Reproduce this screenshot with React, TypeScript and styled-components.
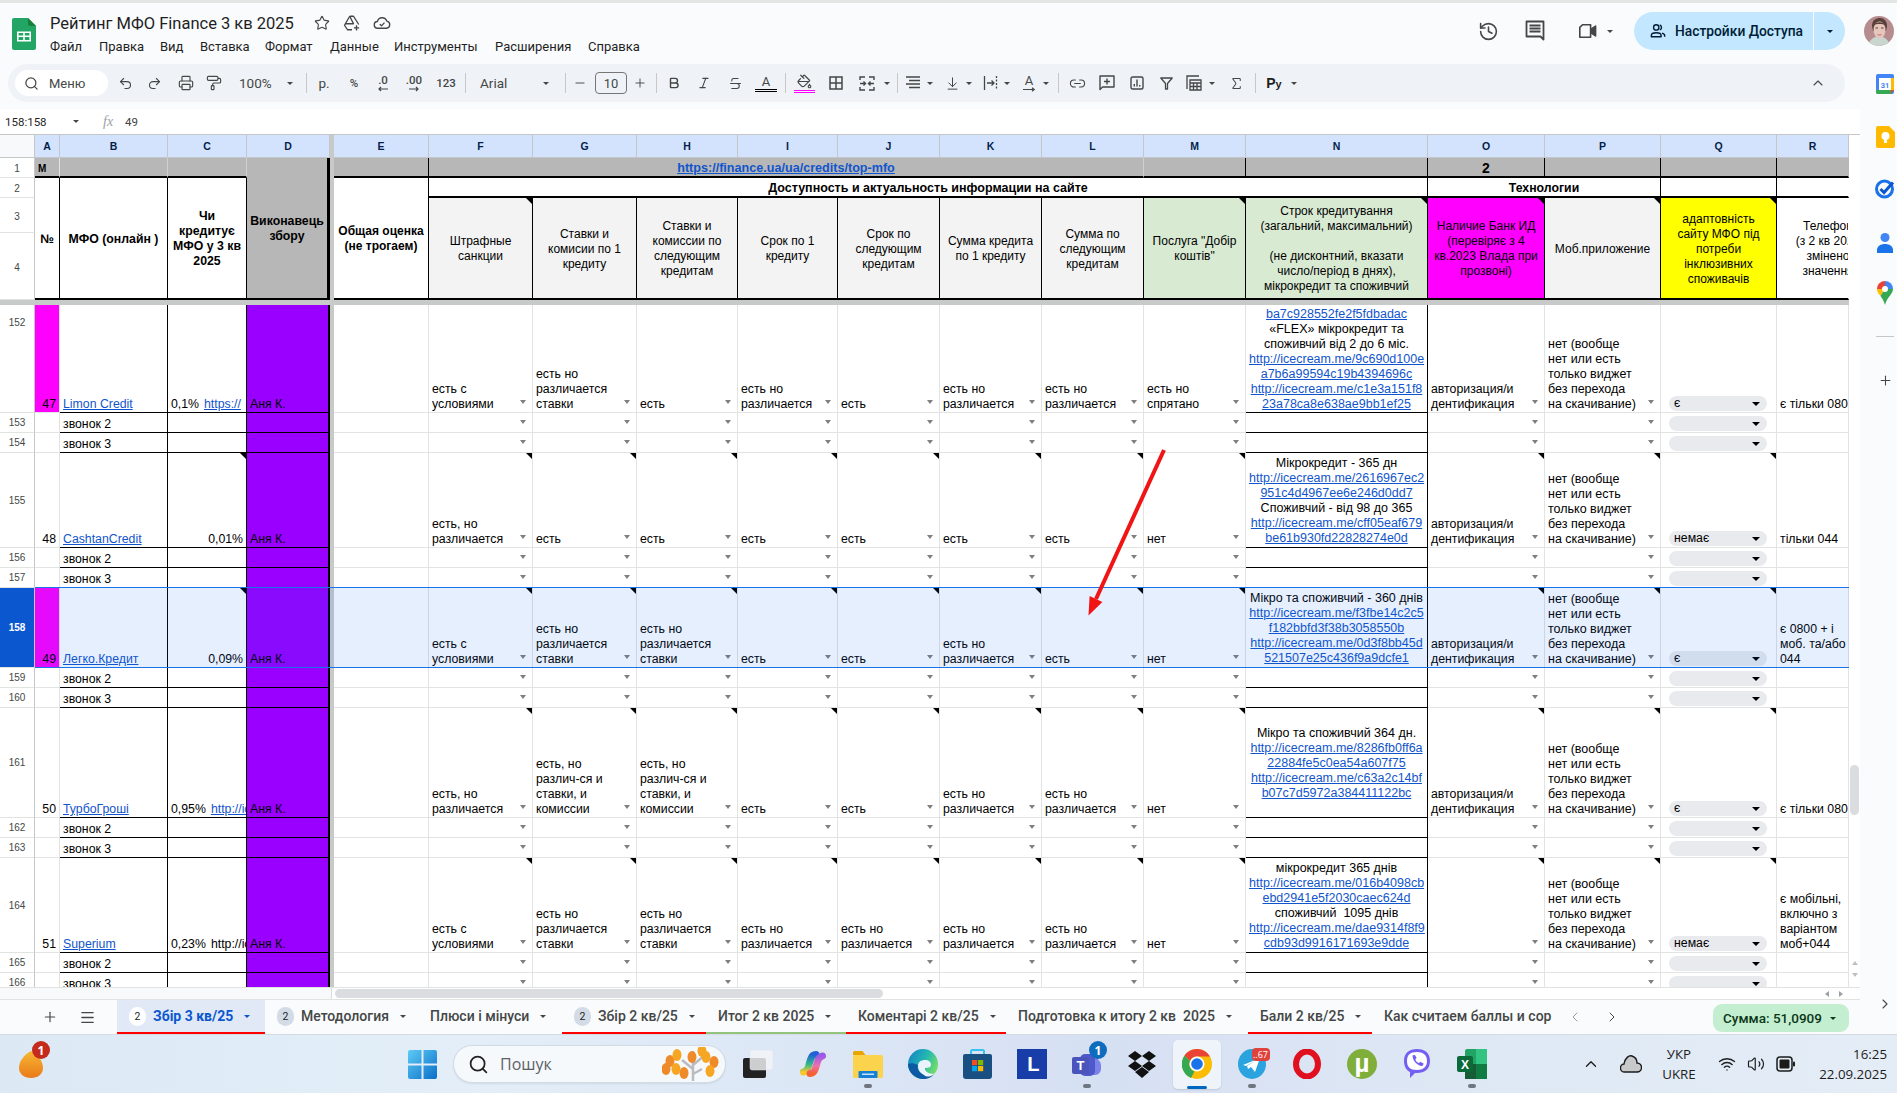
import React from "react";
import styled, { createGlobalStyle } from "styled-components";
import {
  Undo2, Redo2, Printer, PaintRoller, Search, Star, History, ChevronUp, ChevronLeft, ChevronRight,
  Plus, Minus, Menu, Link2, Sigma, Bold, Italic, Strikethrough, PaintBucket, Wifi, Volume2, ArrowDownToLine,
} from "lucide-react";

const Global = createGlobalStyle`
  html, body { margin: 0; padding: 0; background: #f9fbfd; }
  body { font-family: "Liberation Sans", Arial, sans-serif; }
  * { box-sizing: border-box; }
`;

const Page = styled.div`
  width: 1897px; height: 1093px; display: flex; flex-direction: column; overflow: hidden; background: #f9fbfd; position: relative;
`;
const Annotation = styled.svg`
  position: absolute; left: 1080px; top: 445px; width: 90px; height: 175px; z-index: 10; pointer-events: none;
`;
const TopStrip = styled.div`height: 3px; background: #e3e5e5; flex: none;`;
const Workspace = styled.div`display: flex; flex: none; height: 1031px;`;
const LeftCol = styled.div`width: 1860px; display: flex; flex-direction: column;`;

/* ---------- title area ---------- */
const TitleArea = styled.div`height: 61px; display: flex; padding-left: 12px; flex: none;`;
const DocIcon = styled.div`width: 24px; margin: 15px 14px 0 0;`;
const TitleStack = styled.div`display: flex; flex-direction: column;`;
const TitleRow = styled.div`display: flex; align-items: center; height: 26px; margin-top: 7px;`;
const DocTitle = styled.div`
  font-family: Roboto, sans-serif; font-size: 16.5px; color: #1f1f1f; min-width: 257px; white-space: nowrap;
`;
const TitleIcon = styled.div`width: 30px; display: flex; justify-content: center; color: #444746;`;
const MenuRow = styled.div`display: flex; height: 20px; align-items: center;`;
const MenuItem = styled.div<{ $w: number }>`
  width: ${(p) => p.$w}px; font-family: Roboto, sans-serif; font-size: 13px; color: #1f1f1f; white-space: nowrap;
`;
const RightTools = styled.div`margin-left: auto; display: flex; align-items: center; height: 38px; margin-top: 9px;`;
const HeadIcon = styled.div<{ $w: number }>`
  width: ${(p) => p.$w}px; display: flex; justify-content: center; align-items: center; color: #444746; flex: none;
`;
const ShareBtn = styled.div`
  width: 211px; height: 38px; margin: 0 15px 0 0; background: #c2e7ff; border-radius: 19px; display: flex; align-items: center;
`;
const ShareMain = styled.div`
  width: 180px; height: 100%; display: flex; align-items: center; gap: 9px; padding-left: 16px;
  border-right: 1px solid #f9fbfd; font-family: Roboto, sans-serif; font-size: 13.8px; font-weight: 500; color: #001d35; white-space: nowrap;
`;
const ShareArrow = styled.div`flex: 1; display: flex; justify-content: center;`;
const Caret = styled.span<{ $c?: string; $s?: number }>`
  display: inline-block; width: 0; height: 0; flex: none;
  border-left: ${(p) => p.$s ?? 4}px solid transparent; border-right: ${(p) => p.$s ?? 4}px solid transparent;
  border-top: ${(p) => p.$s ?? 4}px solid ${(p) => p.$c ?? "#444746"};
`;

/* ---------- toolbar ---------- */
const Toolbar = styled.div`
  height: 38px; margin: 0 15px 7px 8px; background: #eff3f8; border-radius: 19px; display: flex; align-items: center;
  padding-left: 7px; flex: none; color: #444746;
`;
const MenuPill = styled.div`
  width: 93px; height: 26px; border-radius: 13px; background: #fff; display: flex; align-items: center; gap: 10px; padding-left: 9px; flex: none;
  font-family: Roboto, sans-serif; font-size: 13px; color: #444746;
`;
const ToolBtn = styled.div<{ $w: number; $pl?: number; $between?: boolean; $end?: boolean }>`
  width: ${(p) => p.$w}px; height: 100%; flex: none; display: flex; align-items: center;
  justify-content: ${(p) => (p.$between ? "space-between" : "center")}; padding-left: ${(p) => p.$pl ?? 0}px;
  padding-right: ${(p) => (p.$between ? 3 : 0)}px; font-family: Roboto, sans-serif; font-size: 13.5px; color: #444746;
  margin-left: ${(p) => (p.$end ? "auto" : "0")};
`;
const Sep = styled.div<{ $ml?: number }>`
  width: 1px; height: 20px; background: #c7c7c7; flex: none; margin-left: ${(p) => p.$ml ?? 0}px;
`;
const SizeBox = styled.div`
  width: 32px; height: 22px; border: 1px solid #747775; border-radius: 4px; display: flex; align-items: center; justify-content: center;
  font-family: Roboto, sans-serif; font-size: 13px; color: #444746; flex: none; margin-left: 1px;
`;
const DecText = styled.span`font-size: 11.5px; font-weight: 500; line-height: 11px;`;
const DecWrap = styled.div`display: flex; flex-direction: column; align-items: center;`;
const LetterA = styled.div<{ $bar: string }>`
  font-family: Roboto, sans-serif; font-size: 13px; line-height: 13px; color: #444746; border-bottom: 3px double ${(p) => p.$bar};
  width: 22px; text-align: center; padding-bottom: 1px;
`;
const RotA = styled.div`
  font-family: Roboto, sans-serif; font-size: 13px; line-height: 12px; color: #444746; display: flex; flex-direction: column; align-items: center;
`;
const BucketBar = styled.div`width: 21px; height: 3px; border-top: 1px solid #ff00ff; border-bottom: 1px solid #ff00ff; margin-top: 1px;`;
const StackCol = styled.div`display: flex; flex-direction: column; align-items: center;`;
const PyText = styled.span`font-family: "Liberation Sans", sans-serif; font-weight: 700; font-size: 14px; color: #1f1f1f;`;
const PySmall = styled.span`font-size: 11px;`;

/* ---------- formula bar ---------- */
const FormulaBar = styled.div`
  height: 26px; flex: none; background: #fff; display: flex; align-items: center; font-size: 11.5px; color: #1f1f1f; border-bottom: 1px solid #c4c7c5;
`;
const NameBox = styled.div`width: 103px; padding-left: 5px; display: flex; align-items: center; font-family: Roboto, sans-serif; font-size: 11.5px;`;
const NameCaret = styled.span`margin-left: 26px; display: inline-flex;`;
const FxMark = styled.span`
  width: 22px; font-family: "Liberation Serif", serif; font-style: italic; font-size: 14px; color: #9aa0a6;
`;
const FormulaText = styled.span`font-size: 11.5px; color: #444; font-family: Roboto, sans-serif;`;

/* ---------- sheet ---------- */
const SheetRow = styled.div`display: flex; height: 852px; flex: none;`;
const Grid = styled.div`
  width: 1849px; height: 852px; overflow: hidden; display: grid; background: #fff; position: relative; flex: none;
  grid-template-columns: 35px 25px 108px 79px 83px 4px 95px 104px 104px 101px 100px 102px 102px 102px 102px 182px 117px 116px 116px 72px;
  grid-template-rows: 23px 20px 20px 35px 67px 5px 108px 20px 20px 95px 20px 20px 80px 20px 20px 110px 20px 20px 95px 20px 20px;
  font-size: 12px; line-height: 15px; color: #000;
`;
const Corner = styled.div`
  grid-row: 1; grid-column: 1; background: #f8f9fa; border-right: 1px solid #c4c7c5; border-bottom: 1px solid #c4c7c5;
`;
const ColHead = styled.div<{ $c: number }>`
  grid-row: 1; grid-column: ${(p) => p.$c}; background: #d3e3fd; color: #041e49; font-size: 10.5px; font-weight: 700; padding-top: 1px;
  display: flex; align-items: center; justify-content: center; border-right: 1px solid #c4c7c5; border-bottom: 1px solid #c4c7c5;
`;
const RowHead = styled.div<{ $r: number; $sel?: boolean; $top?: boolean; $hdr?: boolean }>`
  grid-row: ${(p) => p.$r}; grid-column: 1; font-size: 10px; display: flex; justify-content: center;
  align-items: ${(p) => (p.$top ? "flex-start" : "center")}; padding-top: ${(p) => (p.$top ? 10 : p.$hdr ? 2 : 0)}px;
  color: ${(p) => (p.$sel ? "#fff" : "#444746")}; font-weight: ${(p) => (p.$sel ? 700 : 400)};
  background: ${(p) => (p.$sel ? "#0b57d0" : "#fff")}; border-right: 1px solid #c4c7c5; border-bottom: 1px solid #e1e3e1;
`;
const FreezeV = styled.div`grid-row: 1 / -1; grid-column: 6; background: #c8c9c9; z-index: 1;`;
const FreezeH = styled.div`grid-row: 6; grid-column: 1 / -1; background: #c8c9c9;`;
const Band = styled.div`
  grid-row: 13; grid-column: 2 / -1; background: rgba(14, 101, 235, 0.1); border-top: 1px solid #1a73e8; border-bottom: 1px solid #1a73e8;
  margin-top: -1px; z-index: 3; pointer-events: none;
`;

type CellProps = {
  $r: number; $c: number; $rs?: number; $cs?: number; $bg?: string; $right?: string; $bottom?: string; $bw?: number; $rw?: number;
  $v?: "end" | "center"; $h?: "left" | "center" | "right"; $bold?: boolean; $fs?: number;
};
const Cell = styled.div<CellProps>`
  grid-row: ${(p) => p.$r} / span ${(p) => p.$rs ?? 1}; grid-column: ${(p) => p.$c} / span ${(p) => p.$cs ?? 1};
  position: relative; display: flex; flex-direction: column; min-width: 0; min-height: 0;
  justify-content: ${(p) => (p.$v === "center" ? "center" : "flex-end")};
  text-align: ${(p) => p.$h ?? "left"}; white-space: pre; overflow: hidden; padding: ${(p) => (p.$v === "center" ? 2 : 0)}px 3px 0;
  background: ${(p) => p.$bg ?? "transparent"};
  border-right: ${(p) => p.$rw ?? 1}px solid ${(p) => p.$right ?? "#e2e3e3"};
  border-bottom: ${(p) => p.$bw ?? 1}px solid ${(p) => p.$bottom ?? "#e2e3e3"};
  font-weight: ${(p) => (p.$bold ? 700 : 400)}; font-size: ${(p) => p.$fs ?? 12.3}px;
`;
const Note = styled.span`
  position: absolute; top: 0; right: 0; width: 0; height: 0; border-top: 6px solid #000; border-left: 6px solid transparent;
`;
const Drop = styled.span`
  position: absolute; right: 6.5px; bottom: 8px; width: 0; height: 0;
  border-left: 3.5px solid transparent; border-right: 3.5px solid transparent; border-top: 4px solid #7f7f7f;
`;
const Chip = styled.div`
  height: 15px; border-radius: 8px; background: #e8eaed; margin: 0 6px 1px 5px; padding: 0 7px 0 5px; display: flex; align-items: center;
  justify-content: space-between; font-size: 12.3px; flex: none;
`;
const LinkText = styled.span`color: #1155cc; text-decoration: underline;`;
const Line = styled.div``;
const NBlock = styled.div`font-size: 12.5px;`;
const UrlRow = styled.div`display: flex; gap: 5px; white-space: nowrap;`;
const RightText = styled.div`margin-left: auto;`;
const RHeadInner = styled.div`width: 96px; text-align: center; white-space: pre;`;

/* ---------- scroll ---------- */
const VScroll = styled.div`width: 11px; height: 852px; background: #fff; display: flex; flex-direction: column; align-items: center; flex: none;`;
const VThumb = styled.div`width: 9px; height: 50px; margin-top: 630px; background: #dadce0; border-radius: 5px;`;
const VArrow = styled.span<{ $up?: boolean; $mt: number }>`
  margin-top: ${(p) => p.$mt}px; width: 0; height: 0; border-left: 3px solid transparent; border-right: 3px solid transparent;
  ${(p) => (p.$up ? "border-bottom: 4px solid #bdc1c6;" : "border-top: 4px solid #bdc1c6;")}
`;
const HScroll = styled.div`
  height: 13px; flex: none; display: flex; align-items: center; background: #fff; border-top: 1px solid #e1e3e1; border-bottom: 1px solid #e1e3e1;
`;
const HFrozen = styled.div`width: 332px; height: 100%; background: #f8f9fa; border-right: 1px solid #dadce0;`;
const HThumb = styled.div`width: 548px; height: 9px; margin-left: 3px; background: #dadce0; border-radius: 5px;`;
const HArrows = styled.div`margin-left: auto; display: flex; gap: 10px; padding-right: 17px; align-items: center;`;
const HArrowL = styled.span`width: 0; height: 0; border-top: 3px solid transparent; border-bottom: 3px solid transparent; border-right: 4px solid #9aa0a6;`;
const HArrowR = styled.span`width: 0; height: 0; border-top: 3px solid transparent; border-bottom: 3px solid transparent; border-left: 4px solid #9aa0a6;`;

/* ---------- tabs ---------- */
const TabBar = styled.div`height: 34px; flex: none; display: flex; align-items: stretch; background: #f9fbfd; color: #444746;`;
const TabTools = styled.div`width: 117px; padding-left: 30px; display: flex; align-items: center; flex: none;`;
const TabTool = styled.div<{ $w: number }>`width: ${(p) => p.$w}px; display: flex; justify-content: center;`;
const Tab = styled.div<{ $w: number; $line?: string; $active?: boolean }>`
  width: ${(p) => p.$w}px; flex: none; display: flex; align-items: center; padding-left: 12px; gap: 7px; overflow: hidden; white-space: pre;
  font-family: Roboto, sans-serif; font-size: 14px; font-weight: ${(p) => (p.$active ? 700 : 500)};
  color: ${(p) => (p.$active ? "#0b57d0" : "#444746")}; background: ${(p) => (p.$active ? "#e1e9f7" : "transparent")};
  border-bottom: 2px solid ${(p) => p.$line ?? "transparent"};
`;
const TabCaret = styled.span`display: inline-flex; margin-left: 4px;`;
const TabBadge = styled.span<{ $active?: boolean }>`
  width: 17px; height: 19px; border-radius: 9px; flex: none; display: flex; align-items: center; justify-content: center;
  font-size: 10.5px; font-weight: 400; color: #1f1f1f; background: ${(p) => (p.$active ? "#fff" : "#d3dce6")};
`;
const TabArrows = styled.div`width: 78px; display: flex; align-items: center; flex: none; color: #444746; padding-left: 14px; gap: 21px;`;
const SumChip = styled.div`
  margin: 4px 11px 2px auto; width: 136px; background: #c4eed0; border-radius: 9px; display: flex; align-items: center; gap: 8px; padding-left: 10px;
  font-family: Roboto, sans-serif; font-size: 13.5px; font-weight: 500; color: #0a3818; white-space: nowrap;
`;

/* ---------- side panel ---------- */
const Side = styled.div`width: 37px; height: 1031px; display: flex; flex-direction: column; align-items: center; padding-left: 13px;`;
const SideAvatar = styled.div`margin: 13px 0 0 -13px; width: 30px; height: 30px;`;
const SideIcon = styled.div<{ $mt: number }>`margin-top: ${(p) => p.$mt}px; width: 20px; height: 22px; flex: none; display: flex; align-items: center; justify-content: center;`;
const SideRule = styled.div`width: 18px; height: 1px; background: #c4c7c5; margin-top: 32px;`;
const SideEnd = styled.div`margin-top: auto; margin-bottom: 18px; color: #444746;`;

/* ---------- taskbar ---------- */
const Taskbar = styled.div`
  height: 59px; flex: none; display: flex; align-items: center;
  background: linear-gradient(90deg, #dce9f5 0%, #e3eef8 25%, #d6e0f3 58%, #dfe9f5 80%, #e4edf6 100%);
  border-top: 1px solid #d5dbe2;
`;
const Widget = styled.div`width: 397px; height: 100%; display: flex; align-items: center; padding-left: 19px; position: relative; flex: none;`;
const Slot = styled.div<{ $w?: number }>`
  width: ${(p) => p.$w ?? 54.9}px; height: 100%; display: flex; align-items: center; justify-content: center; position: relative; flex: none;
`;
const ActiveTile = styled.span`
  position: absolute; left: 3px; width: 48px; top: 5px; bottom: 4px; background: rgba(240, 243, 250, 0.95); border-radius: 5px;
  box-shadow: 0 1px 2px rgba(0, 0, 0, 0.12);
`;
const OverTile = styled.span`position: relative; display: flex;`;
const ActiveBar = styled.span`position: absolute; left: 17px; width: 20px; height: 3px; bottom: 4px; background: #0067c0; border-radius: 2px;`;
const Dot = styled.span`position: absolute; bottom: 5px; left: calc(50% - 4px); width: 8px; height: 4px; border-radius: 2px; background: #6f7680;`;
const Badge = styled.span<{ $bg: string; $t: number; $l: number; $square?: boolean; $fs?: number }>`
  position: absolute; top: ${(p) => p.$t}px; left: ${(p) => p.$l}px; min-width: 18px; height: ${(p) => (p.$square ? 13 : 18)}px;
  border-radius: ${(p) => (p.$square ? 4 : 9)}px;
  background: ${(p) => p.$bg}; color: #fff; font-size: ${(p) => p.$fs ?? 12}px; font-weight: ${(p) => (p.$square ? 400 : 700)}; display: flex; align-items: center; justify-content: center;
  font-family: "Open Sans", sans-serif; z-index: 2;
`;
const SearchPill = styled.div`
  width: 273px; height: 38px; margin: 0 4.5px 0 6px; flex: none; border-radius: 19px; background: #f6f9fc; border: 1px solid #d2dbe5; display: flex; align-items: center;
  padding-left: 14px; gap: 11px; font-family: "Open Sans", sans-serif; font-size: 16px; color: #5d6166; box-shadow: 0 1px 2px rgba(0,0,0,.08);
`;
const SearchArt = styled.div`margin-left: auto; margin-right: 3px; display: flex;`;
const Tray = styled.div`margin-left: 72px; flex: 1; display: flex; align-items: center; height: 100%; color: #1f1f1f;`;
const TrayIcon = styled.div<{ $w: number; $ml?: number }>`width: ${(p) => p.$w}px; margin-left: ${(p) => p.$ml ?? 0}px; display: flex; justify-content: center; flex: none;`;
const TrayText = styled.div<{ $w?: number; $right?: boolean }>`
  ${(p) => (p.$w ? `width:${p.$w}px;` : "flex:1;")} flex-shrink: 0; font-family: "Open Sans", sans-serif; font-size: 13.3px; line-height: 20px; color: #1b1b1b;
  text-align: ${(p) => (p.$right ? "right" : "center")}; padding-right: ${(p) => (p.$right ? 10 : 0)}px; white-space: pre;
`;

/* ---------- icons ---------- */
const SheetsLogo = () => (
  <svg width="24" height="32" viewBox="0 0 24 32">
    <path d="M2 0h14l8 8v22a2 2 0 0 1-2 2H2a2 2 0 0 1-2-2V2a2 2 0 0 1 2-2z" fill="#23a566" />
    <path d="M16 0l8 8h-6a2 2 0 0 1-2-2z" fill="#188038" />
    <path d="M5 13.500h14v10H5zm1.600 1.600v2.500h4.600v-2.500zm6.200 0v2.500h4.600v-2.500zm-6.200 4v2.800h4.600v-2.800zm6.200 0v2.800h4.600v-2.800z" fill="#fff" fillRule="evenodd" />
  </svg>
);
const DriveMove = () => (
  <svg width="18" height="18" viewBox="0 0 24 24" fill="none" stroke="#444746" strokeWidth="1.800" strokeLinejoin="round">
    <path d="M9 3h5l7 11M12 21H6l-4-6L9 3" /><path d="M9.500 4L14 13H3" /><path d="M18 15v7M14.500 18.500h7" />
  </svg>
);
const CloudOk = () => (
  <svg width="18" height="18" viewBox="0 0 24 24" fill="none" stroke="#444746" strokeWidth="1.800" strokeLinejoin="round">
    <path d="M6.500 19a4.500 4.500 0 0 1-.6-9A6.500 6.500 0 0 1 18.400 9.500 4.800 4.800 0 0 1 18 19z" /><path d="M9 13.500l2.300 2.300 4-4.300" />
  </svg>
);
const CommentIcon = () => (
  <svg width="20" height="22" viewBox="0 0 20 22" fill="none" stroke="#444746" strokeWidth="1.800">
    <path d="M1.500 1.500h17v18l-3-3h-14z" strokeLinejoin="round" /><path d="M4.500 5.500h11M4.500 8.500h11M4.500 11.500h11" />
  </svg>
);
const VideoIcon = () => (
  <svg width="20" height="18" viewBox="0 0 22 20" fill="#444746" stroke="#444746" strokeWidth="1.800" strokeLinejoin="round">
    <path d="M6 3h9v14H3V6z" fill="none" /><path d="M15.500 8l5-3.500v11l-5-3.500z" />
  </svg>
);
const PersonsIcon = () => (
  <svg width="16" height="16" viewBox="0 0 18 18" fill="none" stroke="#001d35" strokeWidth="1.600">
    <circle cx="7" cy="5" r="3" /><path d="M1.500 15.500v-1.500c0-2 3-3 5.500-3s5.500 1 5.500 3v1.500z" strokeLinejoin="round" /><path d="M11 2.200a3 3 0 0 1 0 5.600M13.500 11.400c1.800.5 3 1.400 3 2.600v1.500" />
  </svg>
);
const GridIcon = () => (
  <svg width="14" height="14" viewBox="0 0 14 14" fill="none" stroke="#444746" strokeWidth="1.500"><path d="M1 1h12v12H1zM7 1v12M1 7h12" /></svg>
);
const MergeIcon = () => (
  <svg width="16" height="15" viewBox="0 0 16 15" fill="none" stroke="#444746" strokeWidth="1.400">
    <path d="M6 1H1v3M10 1h5v3M6 14H1v-3M10 14h5v-3" /><path d="M1 7.500h5M4.500 5.500l2 2-2 2M15 7.500h-5M11.500 5.500l-2 2 2 2" />
  </svg>
);
const AlignIcon = () => (
  <svg width="14" height="14" viewBox="0 0 14 14" stroke="#444746" strokeWidth="1.400"><path d="M0 1h14M3 4.500h11M0 8h14M3 11.500h11" /></svg>
);
const WrapIcon = () => (
  <svg width="15" height="14" viewBox="0 0 15 14" fill="none" stroke="#444746" strokeWidth="1.300"><path d="M1.500 0v14" /><path d="M13.500 0v14" strokeDasharray="2 1.500" /><path d="M4 7h7M8.500 4.500L11 7l-2.500 2.500" /></svg>
);
const ChartIcon = () => (
  <svg width="14" height="14" viewBox="0 0 14 14" fill="none" stroke="#444746" strokeWidth="1.400"><rect x="1" y="1" width="12" height="12" rx="1.500" /><path d="M4.300 10.500V8M7 10.500V3.500M9.700 10.500V9" /></svg>
);
const FilterIcon = () => (
  <svg width="13" height="13" viewBox="0 0 13 13" fill="none" stroke="#444746" strokeWidth="1.300" strokeLinejoin="round"><path d="M.8 1h11.400L7.500 6.500V12h-2V6.500z" /></svg>
);
const CommentPlusIcon = () => (
  <svg width="16" height="16" viewBox="0 0 16 16" fill="none" stroke="#444746" strokeWidth="1.400" strokeLinejoin="round">
    <path d="M1 1h14v11H3.500L1 14.500z" /><path d="M8 3.500v6M5 6.500h6" />
  </svg>
);
const TableIcon = () => (
  <svg width="16" height="16" viewBox="0 0 16 16" fill="none" stroke="#444746" strokeWidth="1.300"><path d="M1 14V1h12" /><path d="M4 5h11v10H4zM4 8h11M4 11.500h11M7.500 8v7M11 8v7" /></svg>
);
const PlusSmall = () => <Plus size={14} strokeWidth={1.6} />;
const Avatar = () => (
  <svg width="30" height="30" viewBox="0 0 30 30">
    <defs><clipPath id="av"><circle cx="15" cy="15" r="15" /></clipPath></defs>
    <g clipPath="url(#av)">
      <rect width="30" height="30" fill="#b78c8f" />
      <path d="M4 30c1-6 5-8 7-9h8c2 1 6 3 7 9z" fill="#c9d6d0" />
      <path d="M8 10c0-6 4-8 8-8s7 3 7 8l-1 5H9z" fill="#5a403a" />
      <ellipse cx="15.500" cy="14" rx="6" ry="8.500" fill="#e7c6bb" />
      <path d="M9.500 9c2-3 9-4 12 0-3-1.500-9-1.500-12 0z" fill="#5a403a" />
      <path d="M11.500 12h2.500M17 12h2.500" stroke="#5c3f3a" strokeWidth="1" /><path d="M13.500 18.500c1.300.7 2.700.7 4 0" stroke="#b06a6a" strokeWidth="1" fill="none" />
    </g>
  </svg>
);
const CalendarIcon = () => (
  <svg width="20" height="22" viewBox="0 0 20 22">
    <rect x="1" y="1" width="18" height="20" rx="2" fill="#4285f4" /><rect x="4" y="5" width="12" height="12" fill="#fff" />
    <text x="10" y="14.500" fontSize="7.500" fontFamily="Roboto, sans-serif" fontWeight="700" fill="#4285f4" textAnchor="middle">31</text>
    <path d="M1 17h4v4H3a2 2 0 0 1-2-2z" fill="#34a853" /><path d="M5 17h11v4H5z" fill="#34a853" /><path d="M16 17h3l-3 4z" fill="#ea4335" /><path d="M16 5h3v12h-3z" fill="#fbbc04" />
  </svg>
);
const KeepIcon = () => (
  <svg width="19" height="22" viewBox="0 0 19 22">
    <path d="M2 0h11l6 6v14a2 2 0 0 1-2 2H2a2 2 0 0 1-2-2V2a2 2 0 0 1 2-2z" fill="#ffba00" />
    <circle cx="9.500" cy="10" r="4" fill="#fff" /><rect x="8" y="13.500" width="3" height="3.500" fill="#fff" />
  </svg>
);
const TasksIcon = () => (
  <svg width="20" height="22" viewBox="0 0 20 22" fill="none">
    <circle cx="9.500" cy="11" r="8" stroke="#1a73e8" strokeWidth="3" /><path d="M5.500 11l3.500 3.500 9-10" stroke="#0b57d0" strokeWidth="3" />
  </svg>
);
const ContactIcon = () => (
  <svg width="20" height="22" viewBox="0 0 20 22"><circle cx="10" cy="5.500" r="4.500" fill="#4285f4" /><path d="M2 21v-3c0-4 4-6 8-6s8 2 8 6v3z" fill="#1a73e8" /></svg>
);
const MapsIcon = () => (
  <svg width="16" height="24" viewBox="0 0 16 24">
    <path d="M8 0a8 8 0 0 1 8 8L8 8z" fill="#4285f4" /><path d="M8 0a8 8 0 0 0-8 8l8 0z" fill="#ea4335" />
    <path d="M0 8c0 3 2 5 3.500 7L8 8z" fill="#fbbc04" /><path d="M16 8c0 5-6 8-8 16-1-4-3-7-4.500-9L8 8z" fill="#34a853" />
    <circle cx="8" cy="8" r="3" fill="#fff" />
  </svg>
);
const WinLogo = () => (
  <svg width="29" height="29" viewBox="0 0 29 29">
    <defs><linearGradient id="wg" x1="0" y1="0" x2="1" y2="1"><stop offset="0" stopColor="#5ecbf5" /><stop offset="1" stopColor="#0a6fc9" /></linearGradient></defs>
    <path d="M0 2a2 2 0 0 1 2-2h11.500v13.500H0zM15.500 0H27a2 2 0 0 1 2 2v11.500H15.500zM0 15.500h13.500V29H2a2 2 0 0 1-2-2zM15.500 15.500H29V27a2 2 0 0 1-2 2H15.500z" fill="url(#wg)" />
  </svg>
);
const FruitIcon = () => (
  <svg width="25" height="30" viewBox="0 0 25 30">
    <defs><linearGradient id="fg" x1="0" y1="0" x2="0" y2="1"><stop offset="0" stopColor="#f7b733" /><stop offset="1" stopColor="#ea7a1a" /></linearGradient></defs>
    <path d="M12 2C5 6 0 12 0 19c0 6 5 10 12 10s12-4 12-10C24 12 19 6 12 2z" fill="url(#fg)" />
  </svg>
);
const TreeArt = () => (
  <svg width="60" height="34" viewBox="0 0 60 34">
    <path d="M31 34V4M31 22l-11-9M31 18l12-10M31 27l9-5" stroke="#b8bcc0" strokeWidth="2.500" fill="none" />
    {[[8, 14], [15, 8], [4, 22], [44, 10], [52, 15], [40, 4], [22, 26], [48, 24], [30, 10], [14, 22]].map(([x, y], i) => (
      <ellipse key={i} cx={x} cy={y} rx="4.500" ry="6" fill={i % 2 ? "#f6a623" : "#ef8a2b"} />
    ))}
  </svg>
);
const TaskViewIcon = () => (
  <svg width="30" height="28" viewBox="0 0 30 28">
    <rect x="0" y="8" width="23" height="20" rx="2" fill="#222" />
    <rect x="7" y="0" width="23" height="20" rx="2" fill="#f3f4f6" fillOpacity=".82" stroke="#dfe2e6" strokeWidth=".5" />
  </svg>
);
const CopilotIcon = () => (
  <svg width="30" height="30" viewBox="0 0 30 30" fill="none" strokeLinecap="round">
    <defs>
      <linearGradient id="cl" x1="0" y1="0" x2="0" y2="1"><stop offset="0" stopColor="#1f62d6" /><stop offset=".55" stopColor="#2fb98a" /><stop offset="1" stopColor="#f7c72f" /></linearGradient>
      <linearGradient id="cr" x1="0" y1="0" x2="0" y2="1"><stop offset="0" stopColor="#9a5be8" /><stop offset=".55" stopColor="#ee6fb0" /><stop offset="1" stopColor="#f5612f" /></linearGradient>
    </defs>
    <path d="M16 4.500c-3 0-4.500 2-5.500 5l-2 7c-1 3-2.500 5-5 5.500" transform="translate(2 1)" stroke="url(#cl)" strokeWidth="7" />
    <path d="M14 25.500c3 0 4.500-2 5.500-5l2-7c1-3 2.500-5 5-5.500" transform="translate(-2 -1)" stroke="url(#cr)" strokeWidth="7" />
  </svg>
);
const FolderIcon = () => (
  <svg width="30" height="28" viewBox="0 0 30 28">
    <path d="M0 2.500A1.500 1.500 0 0 1 1.500 1h8l3 4H0z" fill="#e9a400" /><rect y="5" width="30" height="23" rx="1.500" fill="#fbd34d" />
    <rect x="5.500" y="21" width="19" height="7" rx="1" fill="#1780d6" /><rect x="9" y="23.500" width="12" height="1.500" fill="#bfe3ff" />
  </svg>
);
const EdgeIcon = () => (
  <svg width="30" height="30" viewBox="0 0 30 30">
    <defs><linearGradient id="eg" x1="0" y1="0" x2="1" y2="0.500"><stop offset="0" stopColor="#0f7fc8" /><stop offset=".6" stopColor="#25b8b0" /><stop offset="1" stopColor="#6fdc6a" /></linearGradient></defs>
    <circle cx="15" cy="15" r="15" fill="url(#eg)" />
    <path d="M0 15c0 8 7 15 15 15 5 0 9-2 11-5-4 2-9 2-13-1-3-2-4-5-3-8-4-2-7-2-10-1z" fill="#0c59a4" />
    <path d="M10 17c0-4 3-6 7-6s6 2 6 5c0 2-2 3-6 3-1 3 4 6 9 6 1 0-6 5-10 1-4-2-6-5-6-9z" fill="#eaf3fb" />
  </svg>
);
const StoreIcon = () => (
  <svg width="29" height="30" viewBox="0 0 29 30">
    <path d="M8 6V2.500A1.500 1.500 0 0 1 9.500 1h10A1.500 1.500 0 0 1 21 2.500V6" fill="none" stroke="#35c1f1" strokeWidth="2" />
    <path d="M2 5h25a2 2 0 0 1 2 2v20a3 3 0 0 1-3 3H3a3 3 0 0 1-3-3V7a2 2 0 0 1 2-2z" fill="#1a4f82" />
    <rect x="9" y="11" width="5.200" height="5.200" fill="#f25022" /><rect x="15" y="11" width="5.200" height="5.200" fill="#7fba00" /><rect x="9" y="17" width="5.200" height="5.200" fill="#00a4ef" /><rect x="15" y="17" width="5.200" height="5.200" fill="#ffb900" />
  </svg>
);
const LSquare = styled.div`
  width: 30px; height: 30px; background: #183ca8; color: #fff; font-family: "Liberation Sans", sans-serif; font-weight: 700; font-size: 20px;
  display: flex; align-items: center; justify-content: center; padding-left: 2px;
`;
const TeamsIcon = () => (
  <svg width="30" height="30" viewBox="0 0 30 30">
    <circle cx="22" cy="9" r="4.500" fill="#7b83eb" /><rect x="14" y="10" width="15" height="16" rx="6" fill="#7b83eb" /><rect x="8" y="5" width="15" height="22" rx="5" fill="#5059c9" />
    <rect x="0" y="8" width="17" height="17" rx="2" fill="#4b53bc" /><text x="8.500" y="21" fontSize="13" fontWeight="700" fill="#fff" fontFamily="Liberation Sans, sans-serif" textAnchor="middle">T</text>
  </svg>
);
const DropboxIcon = () => (
  <svg width="30" height="28" viewBox="0 0 30 28" fill="#111">
    <path d="M8 1l7 5-7 5-7-5zM22 1l7 5-7 5-7-5zM8 11l7 5-7 5-7-5zM22 11l7 5-7 5-7-5zM15 17l7 5-7 6-7-6z" />
  </svg>
);
const ChromeIcon = () => (
  <svg width="30" height="30" viewBox="0 0 30 30">
    <circle cx="15" cy="15" r="15" fill="#fbbc04" />
    <path d="M15 0a15 15 0 0 1 13 7.500H15a7.500 7.500 0 0 0-7 4.500L2.500 6.500A15 15 0 0 1 15 0z" fill="#ea4335" />
    <path d="M2.500 6.500L8 12a7.500 7.500 0 0 0 4.500 10.300L9 29A15 15 0 0 1 2.500 6.500z" fill="#34a853" />
    <circle cx="15" cy="15" r="7.500" fill="#fff" /><circle cx="15" cy="15" r="5.800" fill="#1a73e8" />
  </svg>
);
const TelegramIcon = () => (
  <svg width="28" height="30" viewBox="0 0 28 30">
    <ellipse cx="14" cy="15" rx="14" ry="15" fill="#2aa3df" /><path d="M5 16l17-7-5 14-4-5-3 2-1-3 8-5-9 5z" fill="#fff" />
  </svg>
);
const OperaIcon = () => (
  <svg width="28" height="30" viewBox="0 0 28 30"><ellipse cx="14" cy="15" rx="11" ry="12.500" fill="none" stroke="#e0101f" strokeWidth="6" /></svg>
);
const TorrentIcon = () => (
  <svg width="30" height="30" viewBox="0 0 30 30">
    <ellipse cx="15" cy="15" rx="15" ry="15" fill="#7fae3a" />
    <text x="15" y="23" fontSize="26" fontWeight="700" fill="#fff" fontFamily="Liberation Sans, sans-serif" textAnchor="middle">µ</text>
  </svg>
);
const ViberIcon = () => (
  <svg width="28" height="32" viewBox="0 0 28 32">
    <path d="M14 1c8 0 13 4 13 12s-5 12-13 12h-2l-5 5v-6C3 22 1 18 1 13 1 5 6 1 14 1z" fill="#7360f2" />
    <path d="M14 4c6 0 10 3 10 9s-4 9-10 9c-7 0-10-3-10-9s3-9 10-9z" fill="#fff" />
    <path d="M9.500 7.500l2.300-.8 1.800 3.400-1.300 1.300c.8 1.800 1.800 2.800 3.600 3.600l1.300-1.300 3.400 1.800-.8 2.300c-4 1-10.300-4.300-10.300-10.300z" fill="#7360f2" />
  </svg>
);
const ExcelIcon = () => (
  <svg width="30" height="30" viewBox="0 0 30 30">
    <rect x="8" y="0" width="22" height="30" rx="2" fill="#21a366" /><rect x="19" y="0" width="11" height="15" fill="#33c481" /><rect x="8" y="15" width="11" height="15" fill="#185c37" /><rect x="19" y="15" width="11" height="15" fill="#107c41" />
    <rect x="0" y="7" width="16" height="16" rx="2" fill="#0b6a3a" /><text x="8" y="19.500" fontSize="12" fontWeight="700" fill="#fff" fontFamily="Liberation Sans, sans-serif" textAnchor="middle">X</text>
  </svg>
);
const CloudTray = () => (
  <svg width="22" height="20" viewBox="0 0 22 20"><path d="M5 18a4 4 0 0 1-1-8C5 4 9 1 12 2c3 1 5 4 5 7a4.500 4.500 0 0 1 0 9z" fill="#c7c9cb" stroke="#1b1b1b" strokeWidth="1.400" /></svg>
);
const BatteryIcon = () => (
  <svg width="20" height="18" viewBox="0 0 20 18" fill="none"><rect x="1" y="2" width="15" height="14" rx="3" stroke="#1b1b1b" strokeWidth="1.500" /><rect x="3.500" y="4.500" width="10" height="9" rx="1" fill="#1b1b1b" /><rect x="17" y="6.500" width="2" height="5" rx="1" fill="#1b1b1b" /></svg>
);

/* ---------- data ---------- */
const HEAD_LETTERS: [number, string][] = [
  [2, "A"], [3, "B"], [4, "C"], [5, "D"], [7, "E"], [8, "F"], [9, "G"], [10, "H"], [11, "I"], [12, "J"], [13, "K"], [14, "L"], [15, "M"], [16, "N"], [17, "O"], [18, "P"], [19, "Q"], [20, "R"],
];
const GREY = "#b7b7b7";
const BLACK = "#000";
const HEAD_COLS: { c: number; text: string; bg: string; note?: boolean }[] = [
  { c: 8, text: "Штрафные\nсанкции\n", bg: "#f3f3f3", note: true },
  { c: 9, text: "Ставки и\nкомисии по 1\nкредиту", bg: "#f3f3f3" },
  { c: 10, text: "Ставки и\nкомиссии по\nследующим\nкредитам", bg: "#f3f3f3" },
  { c: 11, text: "Срок по 1\nкредиту", bg: "#f3f3f3" },
  { c: 12, text: "Срок по\nследующим\nкредитам", bg: "#f3f3f3" },
  { c: 13, text: "Сумма кредита\nпо 1 кредиту", bg: "#f3f3f3" },
  { c: 14, text: "Сумма по\nследующим\nкредитам", bg: "#f3f3f3" },
  { c: 15, text: "Послуга \"Добір\nкоштів\"", bg: "#d9ead3", note: true },
  { c: 16, text: "Строк кредитування\n(загальний, максимальний)\n\n(не дисконтний, вказати\nчисло/період в днях),\nмікрокредит та споживчий", bg: "#d9ead3", note: true },
  { c: 17, text: "Наличие Банк ИД\n(перевіряє з 4\nкв.2023 Влада при\nпрозвоні)", bg: "#ff00ff", note: true },
  { c: 18, text: "Моб.приложение", bg: "#f3f3f3", note: true },
  { c: 19, text: "адаптовність\nсайту МФО під\nпотреби\nінклюзивних\nспоживачів", bg: "#ffff00", note: true },
];

const ES = "есть";
const EU = "есть с\nусловиями";
const ER = "есть но\nразличается";
const ERS = "есть но\nразличается\nставки";
const ENR = "есть, но\nразличается";
const ECH = "есть, но\nразлич-ся и\nставки, и\nкомиссии";
const NO = "нет";
const AUTH = "авторизация/и\nдентификация";
const NOAPP = "нет (вообще\nнет или есть\nтолько виджет\nбез перехода\nна скачивание)";

type NLine = { t: string; link?: boolean };
const L = (t: string): NLine => ({ t, link: true });
const T = (t: string): NLine => ({ t });

type Block = {
  rn: number; gr: number; no: string; name: string; pct: string; url?: string; urlLink?: boolean; cNote?: boolean; marks?: boolean; magenta?: boolean;
  cols: string[]; n: NLine[]; o: string; q: string; r: string; topNum?: boolean; sel?: boolean;
};
const BLOCKS: Block[] = [
  {
    rn: 152, gr: 7, no: "47", name: "Limon Credit", pct: "0,1%", url: "https://", urlLink: true, magenta: true, topNum: true,
    cols: [EU, ERS, ES, ER, ES, ER, ER, "есть но\nспрятано"],
    n: [L("ba7c928552fe2f5fdbadac"), T("«FLEX» мікрокредит та"), T("споживчий від 2 до 6 міс."), L("http://icecream.me/9c690d100e"), L("a7b6a99594c19b4394696c"), L("http://icecream.me/c1e3a151f8"), L("23a78ca8e638ae9bb1ef25")],
    o: AUTH, q: "є", r: "є тільки 080",
  },
  {
    rn: 155, gr: 10, no: "48", name: "CashtanCredit", pct: "0,01%", cNote: true, marks: true,
    cols: [ENR, ES, ES, ES, ES, ES, ES, NO],
    n: [T("Мікрокредит - 365 дн"), L("http://icecream.me/2616967ec2"), L("951c4d4967ee6e246d0dd7"), T("Споживчий - від 98 до 365"), L("http://icecream.me/cff05eaf679"), L("be61b930fd22828274e0d")],
    o: AUTH, q: "немає", r: "тільки 044",
  },
  {
    rn: 158, gr: 13, no: "49", name: "Легко.Кредит", pct: "0,09%", cNote: true, marks: true, magenta: true, sel: true,
    cols: [EU, ERS, ERS, ES, ES, ER, ES, NO],
    n: [T("Мікро та споживчий - 360 днів"), L("http://icecream.me/f3fbe14c2c5"), L("f182bbfd3f38b3058550b"), L("http://icecream.me/0d3f8bb45d"), L("521507e25c436f9a9dcfe1")],
    o: AUTH, q: "є", r: "є 0800 + і\nмоб. та/або\n044",
  },
  {
    rn: 161, gr: 16, no: "50", name: "ТурбоГроші", pct: "0,95%", url: "http://ic", urlLink: true, marks: true,
    cols: [ENR, ECH, ECH, ES, ES, ER, ER, NO],
    n: [T("Мікро та споживчий 364 дн."), L("http://icecream.me/8286fb0ff6a"), L("22884fe5c0ea54a607f75"), L("http://icecream.me/c63a2c14bf"), L("b07c7d5972a384411122bc")],
    o: AUTH, q: "є", r: "є тільки 080",
  },
  {
    rn: 164, gr: 19, no: "51", name: "Superium", pct: "0,23%", url: "http://ic", marks: true,
    cols: [EU, ERS, ERS, ER, ER, ER, ER, NO],
    n: [T("мікрокредит 365 днів"), L("http://icecream.me/016b4098cb"), L("ebd2941e5f2030caec624d"), T("споживчий  1095 днів"), L("http://icecream.me/dae9314f8f9"), L("cdb93d9916171693e9dde")],
    o: "", q: "немає", r: "є мобільні,\nвключно з\nваріантом\nмоб+044",
  },
];

const DataCols = ({ gr, cols, o, marks }: { gr: number; cols: string[]; o: string; marks?: boolean }) => (
  <>
    {cols.map((t, i) => (
      <Cell key={i} $r={gr} $c={8 + i}>{t}<Drop />{marks && <Note />}</Cell>
    ))}
    <Cell $r={gr} $c={17}>{o}<Drop />{marks && <Note />}</Cell>
  </>
);

const SubRow = ({ rn, gr, label }: { rn: number; gr: number; label: string }) => (
  <>
    <RowHead $r={gr}>{rn}</RowHead>
    <Cell $r={gr} $c={2} />
    <Cell $r={gr} $c={3} $right={BLACK} $bottom={BLACK}>{label}</Cell>
    <Cell $r={gr} $c={4} $right={BLACK} $bottom={BLACK} />
    <Cell $r={gr} $c={5} $bg="#9900ff" $right={BLACK} $rw={2} $bottom={BLACK} />
    <Cell $r={gr} $c={7} />
    <DataCols gr={gr} cols={["", "", "", "", "", "", "", ""]} o="" />
    <Cell $r={gr} $c={16} $right={BLACK} $bottom={BLACK} />
    <Cell $r={gr} $c={18}><Drop /></Cell>
    <Cell $r={gr} $c={19}><Chip><span /><Caret $c="#000" /></Chip></Cell>
    <Cell $r={gr} $c={20} />
  </>
);

const BlockRows = ({ b }: { b: Block }) => (
  <>
    <RowHead $r={b.gr} $sel={b.sel} $top={b.topNum}>{b.rn}</RowHead>
    <Cell $r={b.gr} $c={2} $h="right" $bg={b.magenta ? "#ff00ff" : undefined}>{b.no}</Cell>
    <Cell $r={b.gr} $c={3} $right={BLACK} $bottom={BLACK}><Line><LinkText>{b.name}</LinkText></Line></Cell>
    <Cell $r={b.gr} $c={4} $right={BLACK} $bottom={BLACK}>
      <UrlRow>
        {!b.url && <RightText>{b.pct}</RightText>}
        {b.url && <span>{b.pct}</span>}
        {b.url && (b.urlLink ? <LinkText>{b.url}</LinkText> : <span>{b.url}</span>)}
      </UrlRow>
      {b.cNote && <Note />}
    </Cell>
    <Cell $r={b.gr} $c={5} $bg="#9900ff" $right={BLACK} $rw={2} $bottom={BLACK}>Аня К.</Cell>
    <Cell $r={b.gr} $c={7} />
    <DataCols gr={b.gr} cols={b.cols} o={b.o} marks={b.marks} />
    <Cell $r={b.gr} $c={16} $v="center" $h="center" $right={BLACK} $bottom={BLACK}>
      <NBlock>
        {b.n.map((l, i) => (
          <Line key={i}>{l.link ? <LinkText>{l.t}</LinkText> : l.t}</Line>
        ))}
      </NBlock>
    </Cell>
    <Cell $r={b.gr} $c={18} $fs={12.5}>{NOAPP}<Drop />{b.marks && <Note />}</Cell>
    <Cell $r={b.gr} $c={19}>
      <Chip>{b.q}<Caret $c="#000" /></Chip>
      {b.marks && <Note />}
    </Cell>
    <Cell $r={b.gr} $c={20}>{b.r}</Cell>
    <SubRow rn={b.rn + 1} gr={b.gr + 1} label="звонок 2" />
    <SubRow rn={b.rn + 2} gr={b.gr + 2} label="звонок 3" />
  </>
);

const SheetHeader = () => (
  <>
    <Corner />
    {HEAD_LETTERS.map(([c, t]) => <ColHead key={c} $c={c}>{t}</ColHead>)}
    {[1, 2, 3, 4].map((n) => <RowHead key={n} $r={n + 1} $hdr>{n}</RowHead>)}

    <Cell $r={2} $c={2} $bg={GREY} $bottom={BLACK} $bw={2} $v="center" $bold $fs={10}>М</Cell>
    <Cell $r={2} $c={3} $bg={GREY} $bottom={BLACK} $bw={2} $right="#d0d0d0" />
    <Cell $r={2} $c={4} $bg={GREY} $bottom={BLACK} $bw={2} $right="#d0d0d0" />
    <Cell $r={2} $rs={4} $c={5} $bg={GREY} $right={BLACK} $rw={3} $bottom={BLACK} $bw={2} $v="center" $h="center" $bold>{"Виконавець\nзбору"}</Cell>
    <Cell $r={2} $c={7} $bg={GREY} $bottom={BLACK} $bw={2} $right={BLACK} />
    <Cell $r={2} $c={8} $cs={7} $bg={GREY} $bottom={BLACK} $bw={2} $right="#d0d0d0" $v="center" $h="center" $bold $fs={12.6}><Line><LinkText>https://finance.ua/ua/credits/top-mfo</LinkText></Line></Cell>
    <Cell $r={2} $c={15} $bg={GREY} $bottom={BLACK} $bw={2} $right={BLACK} />
    <Cell $r={2} $c={16} $bg={GREY} $bottom={BLACK} $bw={2} $right={BLACK} />
    <Cell $r={2} $c={17} $bg={GREY} $bottom={BLACK} $bw={2} $right={BLACK} $v="center" $h="center" $bold $fs={14}>2</Cell>
    <Cell $r={2} $c={18} $bg={GREY} $bottom={BLACK} $bw={2} $right={BLACK} />
    <Cell $r={2} $c={19} $bg={GREY} $bottom={BLACK} $bw={2} $right={BLACK} />
    <Cell $r={2} $c={20} $bg={GREY} $bottom={BLACK} $bw={2} $right={GREY} />

    <Cell $r={3} $rs={3} $c={2} $right={BLACK} $bottom={BLACK} $bw={2} $v="center" $h="center" $bold>№</Cell>
    <Cell $r={3} $rs={3} $c={3} $right={BLACK} $bottom={BLACK} $bw={2} $v="center" $h="center" $bold>МФО (онлайн )</Cell>
    <Cell $r={3} $rs={3} $c={4} $right={BLACK} $bottom={BLACK} $bw={2} $v="center" $h="center" $bold>{"Чи\nкредитує\nМФО у 3 кв\n2025"}</Cell>
    <Cell $r={3} $rs={3} $c={7} $right={BLACK} $bottom={BLACK} $bw={2} $v="center" $h="center" $bold $fs={12}>{"Общая оценка\n(не трогаем)"}</Cell>
    <Cell $r={3} $c={8} $cs={9} $right={BLACK} $bottom={BLACK} $bw={2} $v="center" $h="center" $bold $fs={12.5}>Доступность и актуальность информации на сайте</Cell>
    <Cell $r={3} $c={17} $cs={2} $right={BLACK} $bottom={BLACK} $bw={2} $v="center" $h="center" $bold>Технологии</Cell>
    <Cell $r={3} $c={19} $right={BLACK} $bottom={BLACK} $bw={2} />
    <Cell $r={3} $c={20} $right="#fff" $bottom={BLACK} $bw={2} />

    {HEAD_COLS.map((h) => (
      <Cell key={h.c} $r={4} $rs={2} $c={h.c} $bg={h.bg} $right={BLACK} $bottom={BLACK} $bw={2} $v="center" $h="center" $fs={12}>
        {h.text}{h.note && <Note />}
      </Cell>
    ))}
    <Cell $r={4} $rs={2} $c={20} $right="#fff" $bottom={BLACK} $bw={2} $v="center" $fs={12}>
      <RHeadInner>{"Телефон\n(з 2 кв 2025\nзмінено\nзначення"}</RHeadInner>
    </Cell>
    <FreezeH />
    <FreezeV />
  </>
);

const TABS: { w: number; t: string; badge?: boolean; line?: string; active?: boolean; noArrow?: boolean }[] = [
  { w: 148, t: "Збір 3 кв/25", badge: true, line: "#ff0000", active: true },
  { w: 153, t: "Методология", badge: true },
  { w: 144, t: "Плюси і мінуси" },
  { w: 144, t: "Збір 2 кв/25", badge: true, line: "#ff0000" },
  { w: 140, t: "Итог 2 кв 2025", line: "#93c47d" },
  { w: 160, t: "Коментарі 2 кв/25", line: "#ff0000" },
  { w: 242, t: "Подготовка к итогу 2 кв  2025" },
  { w: 124, t: "Бали 2 кв/25", line: "#ff0000" },
  { w: 181, t: "Как считаем баллы и сор", noArrow: true },
];

export default function App() {
  return (
    <>
      <Global />
      <Page>
        <TopStrip />
        <Workspace>
          <LeftCol>
            <TitleArea>
              <DocIcon><SheetsLogo /></DocIcon>
              <TitleStack>
                <TitleRow>
                  <DocTitle>Рейтинг МФО Finance 3 кв 2025</DocTitle>
                  <TitleIcon><Star size={16} strokeWidth={1.7} /></TitleIcon>
                  <TitleIcon><DriveMove /></TitleIcon>
                  <TitleIcon><CloudOk /></TitleIcon>
                </TitleRow>
                <MenuRow>
                  <MenuItem $w={49}>Файл</MenuItem>
                  <MenuItem $w={61}>Правка</MenuItem>
                  <MenuItem $w={40}>Вид</MenuItem>
                  <MenuItem $w={65}>Вставка</MenuItem>
                  <MenuItem $w={65}>Формат</MenuItem>
                  <MenuItem $w={64}>Данные</MenuItem>
                  <MenuItem $w={101}>Инструменты</MenuItem>
                  <MenuItem $w={93}>Расширения</MenuItem>
                  <MenuItem $w={60}>Справка</MenuItem>
                </MenuRow>
              </TitleStack>
              <RightTools>
                <HeadIcon $w={47}><History size={21} strokeWidth={1.8} /></HeadIcon>
                <HeadIcon $w={47}><CommentIcon /></HeadIcon>
                <HeadIcon $w={9.5} />
                <HeadIcon $w={38}><VideoIcon /></HeadIcon>
                <HeadIcon $w={8}><Caret $s={3} /></HeadIcon>
                <HeadIcon $w={20} />
                <ShareBtn>
                  <ShareMain><PersonsIcon />Настройки Доступа</ShareMain>
                  <ShareArrow><Caret $c="#001d35" $s={3} /></ShareArrow>
                </ShareBtn>
              </RightTools>
            </TitleArea>

            <Toolbar>
              <MenuPill><Search size={15} strokeWidth={2} />Меню</MenuPill>
              <ToolBtn $w={34}><Undo2 size={15} strokeWidth={1.7} /></ToolBtn>
              <ToolBtn $w={24}><Redo2 size={15} strokeWidth={1.7} /></ToolBtn>
              <ToolBtn $w={40}><Printer size={16} strokeWidth={1.7} /></ToolBtn>
              <ToolBtn $w={16}><PaintRoller size={16} strokeWidth={1.7} /></ToolBtn>
              <ToolBtn $w={74} $pl={17} $between>100%<Caret $s={3.5} /></ToolBtn>
              <Sep $ml={10} />
              <ToolBtn $w={34}>р.</ToolBtn>
              <ToolBtn $w={26}><DecText>%</DecText></ToolBtn>
              <ToolBtn $w={32}><DecWrap><DecText>.0</DecText><svg width="12" height="6" viewBox="0 0 12 6" fill="none" stroke="#444746" strokeWidth="1.200"><path d="M11 3H2M4 1L2 3l2 2" /></svg></DecWrap></ToolBtn>
              <ToolBtn $w={30}><DecWrap><DecText>.00</DecText><svg width="12" height="6" viewBox="0 0 12 6" fill="none" stroke="#444746" strokeWidth="1.200"><path d="M1 3h9M8 1l2 2-2 2" /></svg></DecWrap></ToolBtn>
              <ToolBtn $w={34}><DecText>123</DecText></ToolBtn>
              <Sep $ml={2} />
              <ToolBtn $w={86} $pl={14} $between>Arial<Caret $s={3.5} /></ToolBtn>
              <Sep $ml={13} />
              <ToolBtn $w={28}><Minus size={14} strokeWidth={1.6} /></ToolBtn>
              <SizeBox>10</SizeBox>
              <ToolBtn $w={26}><PlusSmall /></ToolBtn>
              <Sep $ml={3} />
              <ToolBtn $w={34}><Bold size={14} strokeWidth={2.4} /></ToolBtn>
              <ToolBtn $w={26}><Italic size={14} strokeWidth={1.9} /></ToolBtn>
              <ToolBtn $w={36}><Strikethrough size={15} strokeWidth={1.7} /></ToolBtn>
              <ToolBtn $w={26}><LetterA $bar="#000">A</LetterA></ToolBtn>
              <Sep $ml={6} />
              <ToolBtn $w={36}><StackCol><PaintBucket size={15} strokeWidth={1.9} /><BucketBar /></StackCol></ToolBtn>
              <ToolBtn $w={28}><GridIcon /></ToolBtn>
              <ToolBtn $w={34}><MergeIcon /></ToolBtn>
              <ToolBtn $w={6}><Caret $s={3.5} /></ToolBtn>
              <Sep $ml={7} />
              <ToolBtn $w={30}><AlignIcon /></ToolBtn>
              <ToolBtn $w={4}><Caret $s={3.5} /></ToolBtn>
              <ToolBtn $w={32} $pl={8}><ArrowDownToLine size={15} strokeWidth={1.6} /></ToolBtn>
              <ToolBtn $w={10}><Caret $s={3.5} /></ToolBtn>
              <ToolBtn $w={29} $pl={3}><WrapIcon /></ToolBtn>
              <ToolBtn $w={8}><Caret $s={3.5} /></ToolBtn>
              <ToolBtn $w={30} $pl={6}>
                <RotA>A<svg width="14" height="5" viewBox="0 0 14 5" fill="none" stroke="#444746" strokeWidth="1.200"><path d="M1 2.500h11M10 .8l2.200 1.700L10 4.200" /></svg></RotA>
              </ToolBtn>
              <ToolBtn $w={10}><Caret $s={3.5} /></ToolBtn>
              <Sep $ml={7} />
              <ToolBtn $w={36}><Link2 size={17} strokeWidth={1.6} /></ToolBtn>
              <ToolBtn $w={24}><CommentPlusIcon /></ToolBtn>
              <ToolBtn $w={36}><ChartIcon /></ToolBtn>
              <ToolBtn $w={22}><FilterIcon /></ToolBtn>
              <ToolBtn $w={34}><TableIcon /></ToolBtn>
              <ToolBtn $w={2}><Caret $s={3.5} /></ToolBtn>
              <ToolBtn $w={42} $pl={4}><Sigma size={15} strokeWidth={1.7} /></ToolBtn>
              <Sep />
              <ToolBtn $w={36}><PyText>P<PySmall>y</PySmall></PyText></ToolBtn>
              <ToolBtn $w={4}><Caret $s={3.5} /></ToolBtn>
              <ToolBtn $w={54} $end><ChevronUp size={16} strokeWidth={1.7} /></ToolBtn>
            </Toolbar>

            <FormulaBar>
              <NameBox>158:158<NameCaret><Caret $s={3} /></NameCaret></NameBox>
              <FxMark>fx</FxMark>
              <FormulaText>49</FormulaText>
            </FormulaBar>

            <SheetRow>
              <Grid>
                <SheetHeader />
                {BLOCKS.map((b) => <BlockRows key={b.rn} b={b} />)}
                <Band />
              </Grid>
              <VScroll>
                <VThumb />
                <VArrow $up $mt={146} />
                <VArrow $mt={8} />
              </VScroll>
            </SheetRow>
            <HScroll>
              <HFrozen />
              <HThumb />
              <HArrows><HArrowL /><HArrowR /></HArrows>
            </HScroll>
            <TabBar>
              <TabTools>
                <TabTool $w={40}><Plus size={16} strokeWidth={1.7} /></TabTool>
                <TabTool $w={34}><Menu size={17} strokeWidth={1.8} /></TabTool>
              </TabTools>
              {TABS.map((t) => (
                <Tab key={t.t} $w={t.w} $line={t.line} $active={t.active}>
                  {t.badge && <TabBadge $active={t.active}>2</TabBadge>}
                  {t.t}
                  {!t.noArrow && <TabCaret><Caret $c={t.active ? "#0b57d0" : "#444746"} $s={3.5} /></TabCaret>}
                </Tab>
              ))}
              <TabArrows><ChevronLeft size={16} strokeWidth={1.5} color="#9aa0a6" /><ChevronRight size={16} strokeWidth={1.5} /></TabArrows>
              <SumChip>Сумма: 51,0909<Caret $c="#0a3818" $s={3.5} /></SumChip>
            </TabBar>
          </LeftCol>

          <Side>
            <SideAvatar><Avatar /></SideAvatar>
            <SideIcon $mt={27}><CalendarIcon /></SideIcon>
            <SideIcon $mt={31}><KeepIcon /></SideIcon>
            <SideIcon $mt={30}><TasksIcon /></SideIcon>
            <SideIcon $mt={32}><ContactIcon /></SideIcon>
            <SideIcon $mt={28}><MapsIcon /></SideIcon>
            <SideRule />
            <SideIcon $mt={32}><Plus size={15} strokeWidth={1.7} color="#444746" /></SideIcon>
            <SideEnd><ChevronRight size={16} strokeWidth={1.6} /></SideEnd>
          </Side>
        </Workspace>

        <Taskbar>
          <Widget>
            <FruitIcon />
            <Badge $bg="#c42b1c" $t={6} $l={32}>1</Badge>
          </Widget>
          <Slot $w={50}><WinLogo /></Slot>
          <SearchPill>
            <Search size={21} strokeWidth={2} color="#222" />
            Пошук
            <SearchArt><TreeArt /></SearchArt>
          </SearchPill>
          <Slot><TaskViewIcon /></Slot>
          <Slot><CopilotIcon /></Slot>
          <Slot><FolderIcon /><Dot /></Slot>
          <Slot><EdgeIcon /></Slot>
          <Slot><StoreIcon /></Slot>
          <Slot><LSquare>L</LSquare></Slot>
          <Slot><TeamsIcon /><Badge $bg="#0f6cbd" $t={6} $l={29}>1</Badge><Dot /></Slot>
          <Slot><DropboxIcon /></Slot>
          <Slot><ActiveTile /><OverTile><ChromeIcon /></OverTile><ActiveBar /></Slot>
          <Slot><TelegramIcon /><Badge $bg="#e0433d" $t={13} $l={27} $square $fs={9}>..67</Badge><Dot /></Slot>
          <Slot><OperaIcon /></Slot>
          <Slot><TorrentIcon /></Slot>
          <Slot><ViberIcon /></Slot>
          <Slot><ExcelIcon /><Dot /></Slot>
          <Tray>
            <TrayIcon $w={40}><ChevronUp size={18} strokeWidth={1.8} /></TrayIcon>
            <TrayIcon $w={40}><CloudTray /></TrayIcon>
            <TrayText $w={56}>{"УКР\nUKRE"}</TrayText>
            <TrayIcon $w={34} $ml={3}><Wifi size={18} strokeWidth={1.8} /></TrayIcon>
            <TrayIcon $w={24}><Volume2 size={18} strokeWidth={1.6} /></TrayIcon>
            <TrayIcon $w={36}><BatteryIcon /></TrayIcon>
            <TrayText $right>{"16:25\n22.09.2025"}</TrayText>
          </Tray>
        </Taskbar>

        <Annotation viewBox="0 0 90 175">
          <path d="M84 5L16 154" stroke="#f01414" strokeWidth="4" fill="none" />
          <polygon points="8.500,170.400 22.400,156.900 9.600,151.100" fill="#f01414" />
        </Annotation>
      </Page>
    </>
  );
}
